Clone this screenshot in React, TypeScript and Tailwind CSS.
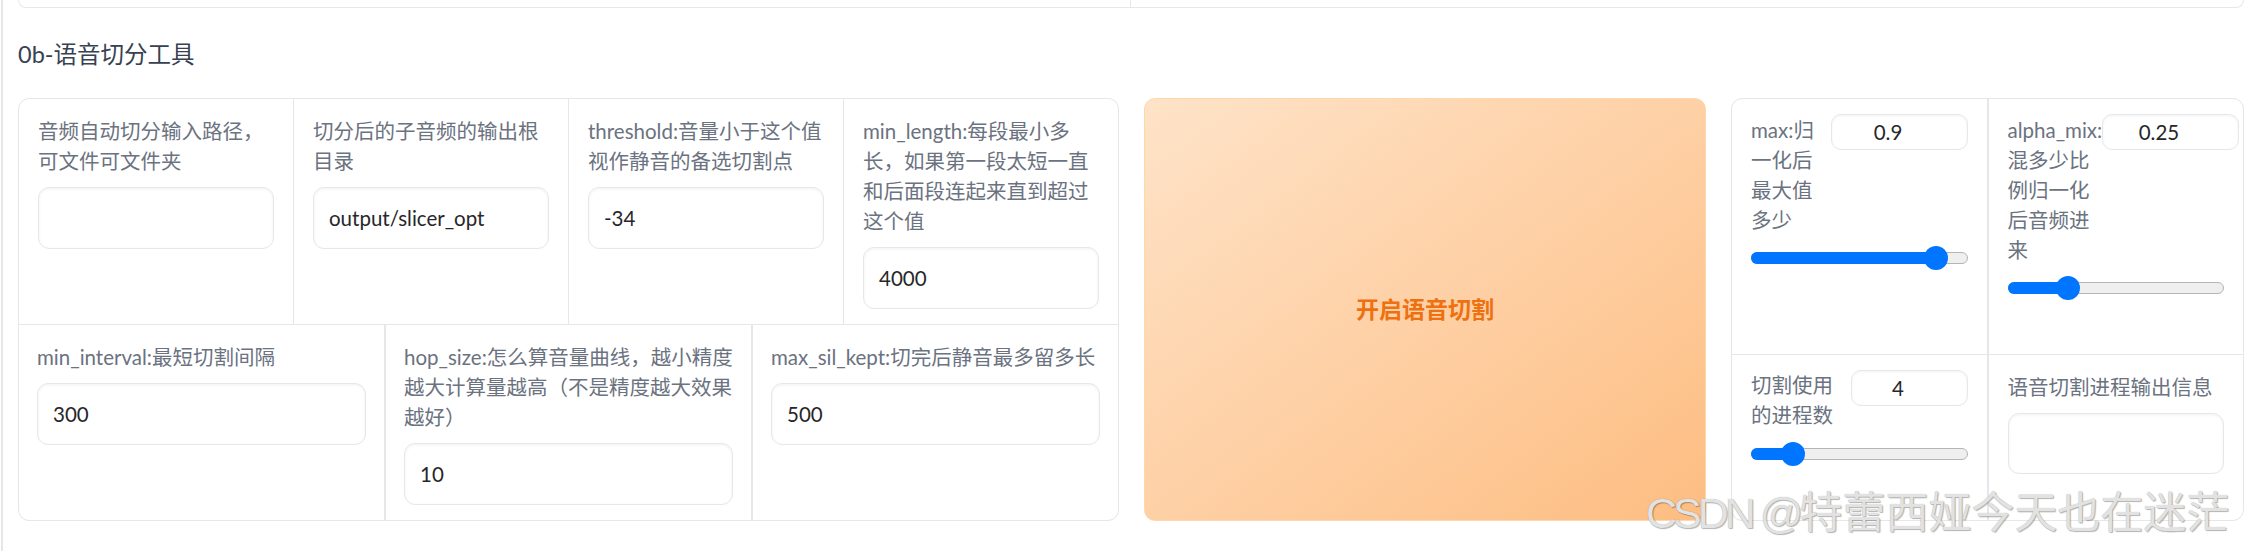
import React from 'react';

type FieldProps = {
  label: string;
  value?: string;
  pad?: string;
};

// plain gradio-like textbox block
const Field = ({ label, value, pad = 'px-[19px]' }: FieldProps) => (
  <div className={`bg-white pt-[17px] pb-[15px] ${pad}`}>
    <div className="mr-[-4px] text-[20.5px] leading-[30px] text-[#6b7280]">{label}</div>
    <div className="mt-[11px] flex h-[62px] items-center rounded-[11px] border border-[#e5e7eb] bg-white px-[15px] text-[20.5px] text-[#27272a] shadow-[inset_0_1px_3px_rgba(0,0,0,0.06)]">
      {value}
    </div>
  </div>
);

const Range = ({ t }: { t: number }) => (
  <div className="relative h-[24px] w-full">
    <div className="absolute left-0 right-0 top-[6px] h-[12px] rounded-full border border-[#b4b4b4] bg-[#efefef]" />
    <div
      className="absolute left-0 top-[6px] h-[12px] rounded-full bg-[#0075ff]"
      style={{ width: `calc(12px + ${t} * (100% - 24px))` }}
    />
    <div
      className="absolute top-0 h-[24px] w-[24px] rounded-full bg-[#0075ff]"
      style={{ left: `calc(${t} * (100% - 24px))` }}
    />
  </div>
);

type SliderProps = {
  label: string;
  value: string;
  t: number;
  labelW: string;
  inputW: string;
  top: string;
  gap: string;
  labelPad?: string;
};

const SliderCell = ({ label, value, t, labelW, inputW, top, gap, labelPad = '' }: SliderProps) => (
  <div className={`bg-white px-[19px] ${top}`}>
    <div className="flex items-start justify-between">
      <div className={`shrink-0 text-[20.5px] leading-[30px] text-[#6b7280] ${labelW} ${labelPad}`}>{label}</div>
      <div
        className={`flex h-[36px] shrink-0 items-center justify-center rounded-[10px] border border-[#e5e7eb] bg-white pr-[22px] text-[20.5px] text-[#27272a] shadow-[inset_0_1px_3px_rgba(0,0,0,0.05)] ${inputW}`}
      >
        {value}
      </div>
    </div>
    <div className={gap}>
      <Range t={t} />
    </div>
  </div>
);

export default function App() {
  return (
    <div className="relative h-[551px] w-[2248px] overflow-hidden bg-white [font-family:Lato,'Noto_Sans_CJK_SC',sans-serif]">
      <div className="ml-[1px] h-full border-l-2 border-[#e7e7ea] pl-[15px]">
        {/* bottom edge of the block above */}
        <div className="flex h-[8px] w-[2226px] rounded-b-[11px] border-x border-b border-[#e5e7eb]">
          <div className="w-[1112px] border-r border-[#e5e7eb]" />
        </div>

        <h2 className="mt-[29px] text-[23.5px] leading-[34px] text-[#374151]">0b-语音切分工具</h2>

        <div className="mt-[27px] flex h-[423px] gap-[25px]">
          {/* form panel */}
          <div className="flex w-[1101px] shrink-0 flex-col gap-px overflow-hidden rounded-[11px] border border-[#e5e7eb] bg-[#e5e7eb]">
            <div className="grid grid-cols-4 gap-px">
              <Field label="音频自动切分输入路径，可文件可文件夹" />
              <Field label="切分后的子音频的输出根目录" value="output/slicer_opt" />
              <Field label="threshold:音量小于这个值视作静音的备选切割点" value="-34" />
              <Field label="min_length:每段最小多长，如果第一段太短一直和后面段连起来直到超过这个值" value="4000" />
            </div>
            <div className="grid flex-1 grid-cols-3 gap-[2px]">
              <Field pad="px-[18px]" label="min_interval:最短切割间隔" value="300" />
              <Field pad="px-[18px]" label="hop_size:怎么算音量曲线，越小精度越大计算量越高（不是精度越大效果越好）" value="10" />
              <Field pad="px-[18px]" label="max_sil_kept:切完后静音最多留多长" value="500" />
            </div>
          </div>

          {/* run button */}
          <button className="flex w-[562px] shrink-0 items-center justify-center rounded-[11px] border border-[#fed7aa] bg-linear-to-br from-[#fee3c8] to-[#fdbd81] text-[23px] font-bold text-[#ee700f]">
            开启语音切割
          </button>

          {/* sliders panel */}
          <div className="flex w-[513px] shrink-0 flex-col gap-px overflow-hidden rounded-[11px] border border-[#e5e7eb] bg-[#e5e7eb]">
            <div className="grid h-[255px] grid-cols-2 gap-[2px]">
              <SliderCell
                label="max:归一化后最大值多少"
                value="0.9"
                t={0.9}
                labelW="w-[70px]"
                inputW="w-[137px]"
                top="pt-[15px]"
                gap="mt-[11px]"
                labelPad="pt-[1px]"
              />
              <SliderCell
                label="alpha_mix:混多少比例归一化后音频进来"
                value="0.25"
                t={0.25}
                labelW="w-[94px]"
                inputW="w-[137px]"
                top="pt-[15px]"
                gap="mt-[11px]"
                labelPad="pt-[1px]"
              />
            </div>
            <div className="grid flex-1 grid-cols-2 gap-[2px]">
              <SliderCell
                label="切割使用的进程数"
                value="4"
                t={0.158}
                labelW="w-[90px]"
                inputW="w-[117px]"
                top="pt-[15px]"
                gap="mt-[12px]"
              />
              <div className="bg-white px-[19px] pt-[17px]">
                <div className="text-[20.5px] leading-[30px] text-[#6b7280]">语音切割进程输出信息</div>
                <div className="mt-[11px] h-[61px] rounded-[11px] border border-[#e5e7eb] bg-white shadow-[inset_0_1px_3px_rgba(0,0,0,0.06)]" />
              </div>
            </div>
          </div>
        </div>
      </div>

      {/* site watermark lying over the screenshot */}
      <div className="pointer-events-none absolute left-[1646px] top-[492px] whitespace-nowrap text-[43px] leading-[43px] text-[#e2e2e2] [font-family:'Liberation_Sans','Noto_Sans_CJK_SC',sans-serif] [text-shadow:1px_1px_1px_rgba(0,0,0,0.28),0_0_1px_rgba(0,0,0,0.3)]">
        <span className="tracking-[-4px]">CSDN @</span>特蕾西娅今天也在迷茫
      </div>
    </div>
  );
}
